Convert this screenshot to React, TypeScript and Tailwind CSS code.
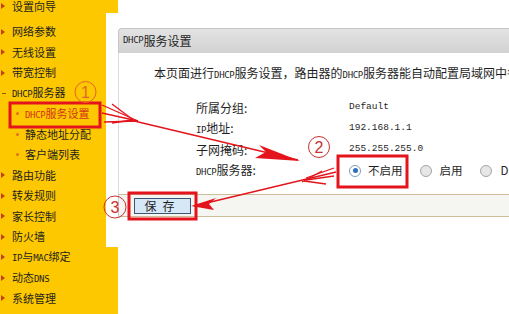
import React from 'react';

const CJK = "font-['Noto_Sans_CJK_SC','Noto_Sans',sans-serif]";
const NARROW = "font-['DejaVu_Sans_Mono',monospace] text-[9px] tracking-[-0.3px]";
const MONO = "font-['Liberation_Mono',monospace] text-[9.5px]";

type MenuItem = { label: React.ReactNode; kind: 'top' | 'open' | 'sub' | 'active' };

const N = ({ children }: { children: React.ReactNode }) => <span className={NARROW}>{children}</span>;

const menu: MenuItem[] = [
  { label: '设置向导', kind: 'top' },
  { label: '网络参数', kind: 'top' },
  { label: '无线设置', kind: 'top' },
  { label: '带宽控制', kind: 'top' },
  { label: <><N>DHCP</N>服务器</>, kind: 'open' },
  { label: <><N>DHCP</N>服务设置</>, kind: 'active' },
  { label: '静态地址分配', kind: 'sub' },
  { label: '客户端列表', kind: 'sub' },
  { label: '路由功能', kind: 'top' },
  { label: '转发规则', kind: 'top' },
  { label: '家长控制', kind: 'top' },
  { label: '防火墙', kind: 'top' },
  { label: <><N>IP</N>与<N>MAC</N>绑定</>, kind: 'top' },
  { label: <>动态<N>DNS</N></>, kind: 'top' },
  { label: '系统管理', kind: 'top' },
];

function Radio({ checked }: { checked?: boolean }) {
  return (
    <span
      className={`flex h-[12px] w-[12px] shrink-0 items-center justify-center rounded-full border ${
        checked ? 'border-[#7f9db9] bg-white' : 'border-[#a5a5a5] bg-[#e6e6e6]'
      }`}
    >
      {checked && <span className="h-[5px] w-[5px] rounded-full bg-[#2f6fb8]" />}
    </span>
  );
}

function Annotations() {
  const red = '#e3141b';
  return (
    <svg className="pointer-events-none absolute inset-0" width="509" height="314" viewBox="0 0 509 314">
      {/* boxes */}
      <rect x="10" y="103" width="90" height="24" fill="none" stroke={red} strokeWidth="3" />
      <rect x="338" y="156" width="69" height="31" fill="none" stroke={red} strokeWidth="3" />
      <rect x="129" y="193" width="67" height="26" fill="none" stroke={red} strokeWidth="3" />

      {/* arrow 1: menu -> radio */}
      <g stroke={red} strokeWidth="1.3" fill="none">
        <line x1="102" y1="105" x2="138" y2="121" />
        <line x1="102" y1="113" x2="138" y2="121" />
        <line x1="104" y1="122" x2="138" y2="121" />
        <line x1="112" y1="104" x2="132" y2="119" />
        <line x1="112" y1="123" x2="132" y2="120" />
        <line x1="130" y1="120" x2="298" y2="160" />
      </g>
      <polygon points="300,161 259,145 266,152 255,158" fill={red} />

      {/* arrow 2: radio -> save */}
      <g stroke={red} strokeWidth="1.3" fill="none">
        <line x1="336" y1="172" x2="194" y2="206" />
        <line x1="334" y1="168" x2="306" y2="178" />
        <line x1="334" y1="176" x2="306" y2="180" />
        <line x1="326" y1="184" x2="304" y2="181" />
        <line x1="322" y1="171" x2="302" y2="182" />
      </g>
      <polygon points="191,206 216,198 209,204 214,210" fill={red} />

      {/* numbered circles */}
      <circle cx="85.5" cy="92" r="10.5" fill="none" stroke="#e2632e" strokeWidth="1" />
      <text x="85.5" y="98" textAnchor="middle" fontSize="16" fill="#e2632e" fontFamily="'Liberation Sans', sans-serif">1</text>
      <circle cx="319" cy="147" r="10.5" fill="none" stroke="#c9322f" strokeWidth="1" />
      <text x="319" y="153" textAnchor="middle" fontSize="16" fill="#c9322f" fontFamily="'Liberation Sans', sans-serif">2</text>
      <circle cx="115" cy="207" r="11" fill="none" stroke="#c9322f" strokeWidth="1" />
      <text x="115" y="213" textAnchor="middle" fontSize="16" fill="#c9322f" fontFamily="'Liberation Sans', sans-serif">3</text>
    </svg>
  );
}

export default function App() {
  return (
    <div className={`relative flex h-[314px] w-[509px] overflow-hidden bg-white ${CJK} text-[#1f1f1f]`}>
      {/* Sidebar */}
      <aside className="w-[106px] shrink-0 bg-[#fdc800]">
        <ul className="mt-[1px]">
          {menu.map((m, i) => (
            <li
              key={i}
              className={`relative flex h-[20.5px] items-center text-[11px] leading-none ${i === 0 ? '-mt-[5px] mb-[5px]' : ''}`}
            >
              {m.kind === 'top' && (
                <span className="absolute left-[1px] h-0 w-0 border-y-[3px] border-l-[4px] border-y-transparent border-l-[#c4421b]" />
              )}
              {m.kind === 'open' && <span className="absolute left-[2px] h-[1px] w-[4px] bg-[#8a5a20]" />}
              {(m.kind === 'sub' || m.kind === 'active') && (
                <span className="absolute left-[16px] h-[3px] w-[3px] rounded-full bg-[#e0701e]" />
              )}
              <span
                className={
                  m.kind === 'sub' || m.kind === 'active'
                    ? `pl-[25px] ${m.kind === 'active' ? 'text-[#d3311a]' : ''}`
                    : 'pl-[12px]'
                }
              >
                {m.label}
              </span>
            </li>
          ))}
        </ul>
      </aside>

      {/* frame gap */}
      <div className="flex w-[12px] shrink-0 flex-col">
        <div className="h-[13px] bg-[#fdc800]" />
        <div className="flex-1 bg-white" />
        <div className="h-[67px] bg-[#fdc800]" />
      </div>

      {/* Main panel */}
      <main className="flex flex-1 flex-col pt-[28px]">
        <div className="flex h-[25px] items-center rounded-tl-[4px] border-l border-t border-[#c6c6c6] bg-gradient-to-b from-[#e3e3e3] to-[#d2d2d2] pl-[4px] text-[12px]">
          <N>DHCP</N>服务设置
        </div>
        <div className="flex h-[141px] flex-col border-l border-[#dcdcdc] bg-white">
          <p className="mt-[12px] whitespace-nowrap pl-[35px] text-[12px] leading-[16px]">
            本页面进行<N>DHCP</N>服务设置，路由器的<N>DHCP</N>服务器能自动配置局域网中各
          </p>
          <div className="mt-[14px] flex flex-col pl-[77px] text-[12px]">
            <div className="flex h-[21px] items-center">
              <span className="w-[153px]">所属分组:</span>
              <span className={MONO}>Default</span>
            </div>
            <div className="flex h-[21px] items-center">
              <span className="w-[153px]"><N>IP</N>地址:</span>
              <span className={MONO}>192.168.1.1</span>
            </div>
            <div className="flex h-[21px] items-center">
              <span className="w-[153px]">子网掩码:</span>
              <span className={MONO}>255.255.255.0</span>
            </div>
            <div className="flex h-[21px] items-center whitespace-nowrap">
              <span className="w-[153px] shrink-0"><N>DHCP</N>服务器:</span>
              <Radio checked />
              <span className="ml-[7px] text-[11.5px]">不启用</span>
              <span className="ml-[17px]"><Radio /></span>
              <span className="ml-[8px] text-[11.5px]">启用</span>
              <span className="ml-[17px]"><Radio /></span>
              <span className="ml-[9px] text-[11.5px]">D</span>
            </div>
          </div>
        </div>
        <div className="flex h-[23px] items-center border-y border-l border-y-[#cdbd98] border-l-[#c8c8c8] bg-[#f5f5f1] pl-[15px]">
          <button className="flex h-[16px] w-[57px] items-center justify-center border border-[#3b5873] bg-[#d6e7f6] text-[12px] leading-none tracking-[6px]">
            保存
          </button>
        </div>
      </main>

      <Annotations />
    </div>
  );
}
